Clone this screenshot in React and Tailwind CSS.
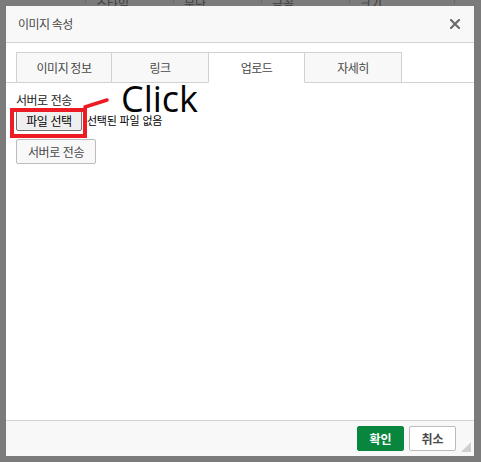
import React from "react";

const font = { fontFamily: '"Noto Sans CJK KR", "Noto Sans", sans-serif' };

function Tab({ label, active, w, first }) {
  return (
    <div
      className={`flex items-center justify-center h-[31px] border border-[#d1d1d1] ${
        first ? "" : "-ml-px"
      } ${active ? "bg-white border-b-white relative z-10" : "bg-[#f8f8f8]"} text-[12px] text-[#484848] tracking-[-0.5px] ${w}`}
    >
      {label}
    </div>
  );
}

export default function App() {
  return (
    <div className="relative w-[481px] h-[462px] bg-[#7b7b7b] overflow-hidden" style={font}>
      {/* clipped toolbar strip behind overlay */}
      <div className="absolute left-0 top-0 w-full h-[6px] overflow-hidden">
        <div className="flex items-end h-[6px] text-[#3e3e3e] text-[12px] leading-none -translate-y-[2px]">
          <div className="w-[86px] border-r border-[#6a6a6a] h-[6px]"></div>
          <div className="w-[88px] border-r border-[#6a6a6a] h-[6px] pl-[10px]">스타일</div>
          <div className="w-[88px] border-r border-[#6a6a6a] h-[6px] pl-[10px]">문단</div>
          <div className="w-[88px] border-r border-[#6a6a6a] h-[6px] pl-[10px]">글꼴</div>
          <div className="w-[105px] border-r border-[#6a6a6a] h-[6px] pl-[10px]">크기</div>
        </div>
      </div>

      <div className="absolute left-[6px] top-[6px] w-[468px] h-[450px] bg-white flex flex-col">
        {/* header */}
        <div className="h-[37px] bg-[#f8f8f8] border-b border-[#d1d1d1] flex items-center justify-between pl-[12px] pr-[14px] shrink-0">
          <span className="text-[12px] text-[#484848] tracking-[-0.5px]">이미지 속성</span>
          <svg width="10" height="10" viewBox="0 0 10 10">
            <path d="M1 1 L9 9 M9 1 L1 9" stroke="#6b6b6b" strokeWidth="2.2" strokeLinecap="square" />
          </svg>
        </div>

        {/* body */}
        <div className="flex-1 flex flex-col pt-[9px]">
          <div className="flex pl-[10px] border-b border-[#d1d1d1] h-[31px] items-start">
            <Tab label="이미지 정보" w="w-[96px]" first />
            <Tab label="링크" w="w-[98px]" />
            <Tab label="업로드" w="w-[97px]" active />
            <Tab label="자세히" w="w-[98px]" />
          </div>
          <div className="pl-[10px] pt-[9px] flex flex-col items-start">
            <div className="text-[12px] text-[#222] tracking-[-0.5px] [word-spacing:1px] leading-[16px]">서버로 전송</div>
            <div className="flex items-center mt-[2px]">
              <div className="h-[21px] w-[66px] flex items-center justify-center bg-[#efefef] border border-[#767676] rounded-[2px] text-[12px] text-black tracking-[-0.5px] [word-spacing:1px]">
                파일 선택
              </div>
              <span className="ml-[5px] text-[11px] text-black tracking-[-0.3px] [word-spacing:1px]">선택된 파일 없음</span>
            </div>
            <div className="mt-[8px] h-[25px] w-[80px] flex items-center justify-center bg-[#f8f8f8] border border-[#bcbcbc] rounded-[2px] text-[12px] text-[#484848] tracking-[-0.5px] [word-spacing:1px]">
              서버로 전송
            </div>
          </div>
        </div>

        {/* footer */}
        <div className="relative h-[36px] bg-[#f8f8f8] border-t border-[#d1d1d1] flex items-center justify-end pr-[18px] gap-[5px] shrink-0">
          <div className="h-[25px] w-[47px] flex items-center justify-center bg-[#09863e] border border-[#09863e] rounded-[2px] text-white text-[12px] font-bold">
            확인
          </div>
          <div className="h-[25px] w-[47px] flex items-center justify-center bg-white border border-[#bcbcbc] rounded-[2px] text-[#484848] text-[12px] font-bold">
            취소
          </div>
          <svg className="absolute right-[3px] bottom-[4px]" width="10" height="10" viewBox="0 0 10 10">
            <path d="M10 0 L10 10 L0 10 Z" fill="#cfcfcf" />
          </svg>
        </div>
      </div>

      {/* annotation overlay */}
      <div className="absolute left-[10px] top-[108px] w-[77px] h-[30px] border-[4px] border-[#ed1c24]"></div>
      <svg className="absolute left-0 top-0" width="481" height="462" viewBox="0 0 481 462">
        <path d="M85 107 L107 100" stroke="#ed1c24" strokeWidth="3.5" strokeLinecap="round" />
      </svg>
      <div
        className="absolute left-[121px] top-[77px] text-[36px] leading-[44px] text-[#050505]"
        style={{ fontFamily: '"Open Sans", sans-serif' }}
      >
        Click
      </div>
    </div>
  );
}
